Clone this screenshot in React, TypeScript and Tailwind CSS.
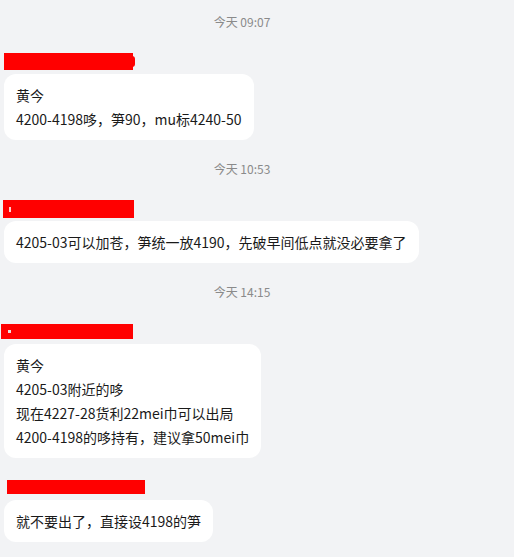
const font = { fontFamily: '"Noto Sans CJK SC", "Noto Sans", sans-serif' };

type Msg = {
  time?: string;
  redOffset: string;
  redWidth: string;
  redHeight: string;
  lines: string[];
};

const messages: Msg[] = [
  { time: '今天 09:07', redOffset: 'mt-[1px] ml-0', redWidth: 'w-[129px]', redHeight: 'h-[17px]', lines: ['黄今', '4200-4198哆，笋90，mu标4240-50'] },
  { time: '今天 10:53', redOffset: 'mt-[1px] ml-[-1px]', redWidth: 'w-[131px]', redHeight: 'h-[18px]', lines: ['4205-03可以加苍，笋统一放4190，先破早间低点就没必要拿了'] },
  {
    time: '今天 14:15',
    redOffset: 'mt-[2px] ml-[-3px]',
    redWidth: 'w-[132px]',
    redHeight: 'h-[15px]',
    lines: ['黄今', '4205-03附近的哆', '现在4227-28货利22mei巾可以出局', '4200-4198的哆持有，建议拿50mei巾'],
  },
  { redOffset: 'mt-[2px] ml-[3px]', redWidth: 'w-[138px]', redHeight: 'h-[14px]', lines: ['就不要出了，直接设4198的笋'] },
];

const App = () => {
  return (
    <div className="min-h-[557px] w-[514px] bg-[#f2f3f5] pt-[13px]" style={font}>
      {messages.map((m, i) => (
        <div key={i} className="flex flex-col items-start">
          {m.time && (
            <div className="mb-[21px] flex h-[18px] w-full items-center justify-center text-[12px] leading-[18px] text-[#8a8a8a]">
              <span className="ml-[-30px]">{m.time}</span>
            </div>
          )}
          <div className="flex h-[18px] items-start pl-[4px]">
            <div className={`${m.redOffset} ${m.redWidth} ${m.redHeight} relative bg-[#ff0000]`}>
              {i === 0 && <div className="absolute right-[-2px] top-[3px] h-[11px] w-[3px] rounded-r bg-[#ff0000]" />}
              {i === 1 && <div className="absolute left-[6px] top-[7px] h-[5px] w-[2px] bg-[#ffd0d0]" />}
              {i === 2 && <div className="absolute left-[7px] top-[6px] h-[3px] w-[3px] bg-[#e8e0e0]" />}
            </div>
          </div>
          <div className="ml-[4px] mt-[4px] rounded-xl bg-white px-3 py-[9px] text-[14px] leading-[24px] text-[#1a1a1a]">
            {m.lines.map((l, j) => (
              <div key={j} className="whitespace-nowrap">{l}</div>
            ))}
          </div>
          <div className="h-[20px]" />
        </div>
      ))}
    </div>
  );
};

export default App;
